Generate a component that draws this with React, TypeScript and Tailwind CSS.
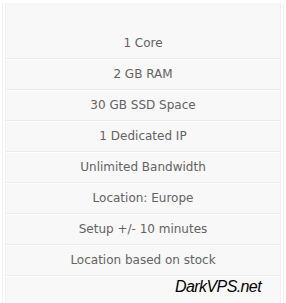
const features = [
  "1 Core",
  "2 GB RAM",
  "30 GB SSD Space",
  "1 Dedicated IP",
  "Unlimited Bandwidth",
  "Location: Europe",
  "Setup +/- 10 minutes",
  "Location based on stock",
];

const App = () => {
  return (
    <div className="w-[286px] h-[303px] bg-white pt-[3px] px-[2px] overflow-hidden">
      <div className="h-full border-x border-[#f0f0f0] bg-white px-[2px]">
        <div className="h-full border-x border-[#f0f0f0] bg-[#f8f8f8]">
          {/* Plan features */}
          <ul className="pt-[25px] font-['DejaVu_Sans',sans-serif] text-[12px] text-[#636363]">
            {features.map((f) => (
              <li
                key={f}
                className="h-[31px] flex items-center justify-center border-b border-[#ececec] shadow-[0_1px_0_#ffffff]"
              >
                {f}
              </li>
            ))}
          </ul>
          <div className="h-[22px] flex items-center justify-end pr-[19px] font-['Liberation_Sans',Arial,sans-serif] italic text-[16px] tracking-[-0.6px] text-black">
            DarkVPS.net
          </div>
        </div>
      </div>
    </div>
  );
};

export default App;
